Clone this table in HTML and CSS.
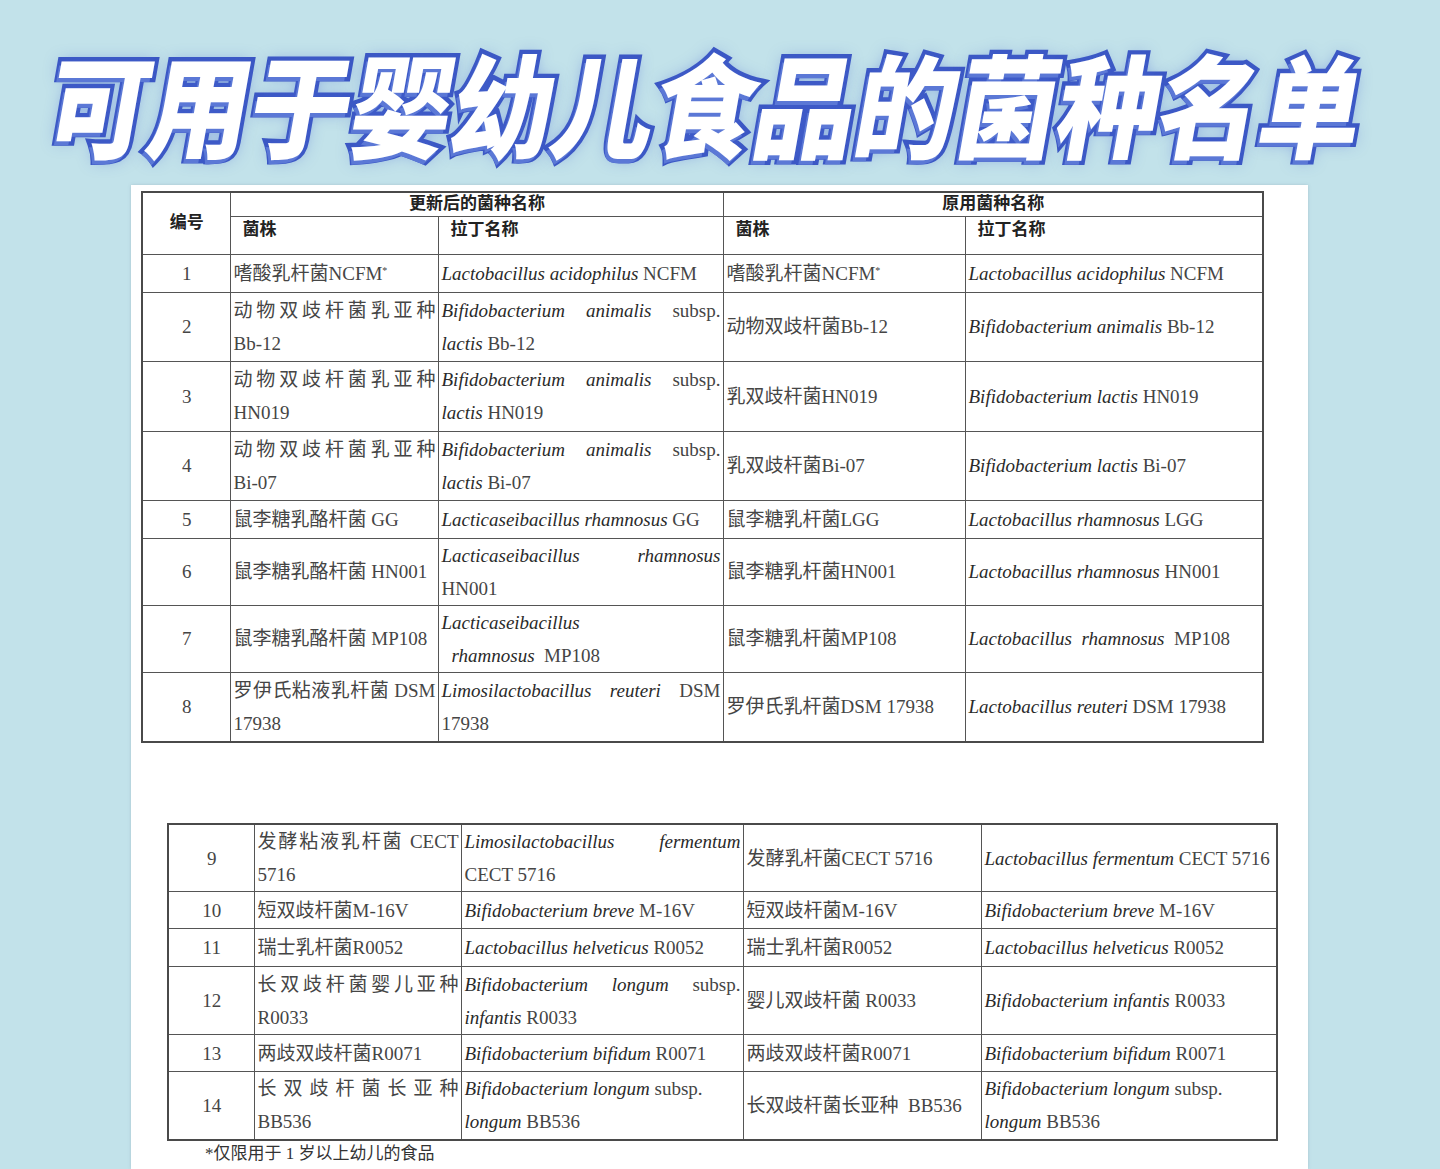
FILE: index.html
```html
<!DOCTYPE html>
<html lang="zh-CN">
<head>
<meta charset="utf-8">
<title>可用于婴幼儿食品的菌种名单</title>
<link rel="stylesheet" href="styles.css">
</head>
<body>
<header class="hero">
  <h1 class="title">可用于婴幼儿食品的菌种名单</h1>
</header>
<main class="paper">
  <table class="tbl tbl-a">
    <colgroup>
      <col class="a1"><col class="a2"><col class="a3"><col class="a4"><col class="a5">
    </colgroup>
    <tr class="h-top">
      <th rowspan="2" class="num head-num">编号</th>
      <th colspan="2" class="center">更新后的菌种名称</th>
      <th colspan="2" class="center">原用菌种名称</th>
    </tr>
    <tr class="h-sub">
      <th class="sub">菌株</th>
      <th class="sub">拉丁名称</th>
      <th class="sub">菌株</th>
      <th class="sub">拉丁名称</th>
    </tr>
    <tr class="r38">
      <td class="num">1</td>
      <td>嗜酸乳杆菌NCFM<sup>*</sup></td>
      <td><i>Lactobacillus acidophilus</i> NCFM</td>
      <td>嗜酸乳杆菌NCFM<sup>*</sup></td>
      <td><i>Lactobacillus acidophilus</i> NCFM</td>
    </tr>
    <tr class="r70">
      <td class="num">2</td>
      <td><span class="ln fill">动物双歧杆菌乳亚种</span><span class="ln">Bb-12</span></td>
      <td><span class="ln fill"><i>Bifidobacterium animalis</i> subsp.</span><span class="ln"><i>lactis</i> Bb-12</span></td>
      <td>动物双歧杆菌Bb-12</td>
      <td><i>Bifidobacterium animalis</i> Bb-12</td>
    </tr>
    <tr class="r71">
      <td class="num">3</td>
      <td><span class="ln fill">动物双歧杆菌乳亚种</span><span class="ln">HN019</span></td>
      <td><span class="ln fill"><i>Bifidobacterium animalis</i> subsp.</span><span class="ln"><i>lactis</i> HN019</span></td>
      <td>乳双歧杆菌HN019</td>
      <td><i>Bifidobacterium lactis</i> HN019</td>
    </tr>
    <tr class="r70">
      <td class="num">4</td>
      <td><span class="ln fill">动物双歧杆菌乳亚种</span><span class="ln">Bi-07</span></td>
      <td><span class="ln fill"><i>Bifidobacterium animalis</i> subsp.</span><span class="ln"><i>lactis</i> Bi-07</span></td>
      <td>乳双歧杆菌Bi-07</td>
      <td><i>Bifidobacterium lactis</i> Bi-07</td>
    </tr>
    <tr class="r38">
      <td class="num">5</td>
      <td>鼠李糖乳酪杆菌 GG</td>
      <td><i>Lacticaseibacillus rhamnosus</i> GG</td>
      <td>鼠李糖乳杆菌LGG</td>
      <td><i>Lactobacillus rhamnosus</i> LGG</td>
    </tr>
    <tr class="r66">
      <td class="num">6</td>
      <td>鼠李糖乳酪杆菌 HN001</td>
      <td><span class="ln fill"><i>Lacticaseibacillus rhamnosus</i></span><span class="ln">HN001</span></td>
      <td>鼠李糖乳杆菌HN001</td>
      <td><i>Lactobacillus rhamnosus</i> HN001</td>
    </tr>
    <tr class="r66">
      <td class="num">7</td>
      <td>鼠李糖乳酪杆菌 MP108</td>
      <td><span class="ln"><i>Lacticaseibacillus</i></span><span class="ln indent"><i>rhamnosus</i>&nbsp; MP108</span></td>
      <td>鼠李糖乳杆菌MP108</td>
      <td><i>Lactobacillus&nbsp; rhamnosus</i>&nbsp; MP108</td>
    </tr>
    <tr class="r71">
      <td class="num">8</td>
      <td><span class="ln fill">罗伊氏粘液乳杆菌 DSM</span><span class="ln">17938</span></td>
      <td><span class="ln fill"><i>Limosilactobacillus reuteri</i> DSM</span><span class="ln">17938</span></td>
      <td>罗伊氏乳杆菌DSM 17938</td>
      <td><i>Lactobacillus reuteri</i> DSM 17938</td>
    </tr>
  </table>

  <table class="tbl tbl-b">
    <colgroup>
      <col class="b1"><col class="b2"><col class="b3"><col class="b4"><col class="b5">
    </colgroup>
    <tr class="r66">
      <td class="num">9</td>
      <td><span class="ln fill">发酵粘液乳杆菌 CECT</span><span class="ln">5716</span></td>
      <td><span class="ln fill"><i>Limosilactobacillus fermentum</i></span><span class="ln">CECT 5716</span></td>
      <td>发酵乳杆菌CECT 5716</td>
      <td><i>Lactobacillus fermentum</i> CECT 5716</td>
    </tr>
    <tr class="r37">
      <td class="num">10</td>
      <td>短双歧杆菌M-16V</td>
      <td><i>Bifidobacterium breve</i> M-16V</td>
      <td>短双歧杆菌M-16V</td>
      <td><i>Bifidobacterium breve</i> M-16V</td>
    </tr>
    <tr class="r38">
      <td class="num">11</td>
      <td>瑞士乳杆菌R0052</td>
      <td><i>Lactobacillus helveticus</i> R0052</td>
      <td>瑞士乳杆菌R0052</td>
      <td><i>Lactobacillus helveticus</i> R0052</td>
    </tr>
    <tr class="r69">
      <td class="num">12</td>
      <td><span class="ln fill">长双歧杆菌婴儿亚种</span><span class="ln">R0033</span></td>
      <td><span class="ln fill"><i>Bifidobacterium longum</i> subsp.</span><span class="ln"><i>infantis</i> R0033</span></td>
      <td>婴儿双歧杆菌 R0033</td>
      <td><i>Bifidobacterium infantis</i> R0033</td>
    </tr>
    <tr class="r37">
      <td class="num">13</td>
      <td>两歧双歧杆菌R0071</td>
      <td><i>Bifidobacterium bifidum</i> R0071</td>
      <td>两歧双歧杆菌R0071</td>
      <td><i>Bifidobacterium bifidum</i> R0071</td>
    </tr>
    <tr class="r69">
      <td class="num">14</td>
      <td><span class="ln fill">长双歧杆菌长亚种</span><span class="ln">BB536</span></td>
      <td><span class="ln"><i>Bifidobacterium longum</i> subsp.</span><span class="ln"><i>longum</i> BB536</span></td>
      <td>长双歧杆菌长亚种&nbsp; BB536</td>
      <td><span class="ln"><i>Bifidobacterium longum</i> subsp.</span><span class="ln"><i>longum</i> BB536</span></td>
    </tr>
  </table>
  <p class="note">*仅限用于 1 岁以上幼儿的食品</p>
</main>
</body>
</html>
```

FILE: styles.css
```css
* { box-sizing: border-box; }

html, body {
  margin: 0;
  padding: 0;
}

body {
  width: 1440px;
  height: 1169px;
  overflow: hidden;
  background: #c2e2ea;
  font-family: "Liberation Serif", "Noto Sans CJK SC", serif;
  color: #333;
}

.hero {
  height: 185px;
  display: flex;
  align-items: center;
  justify-content: center;
  padding-top: 18px;
  padding-right: 28px;
}

.title {
  margin: 0;
  font-family: "Noto Sans CJK SC", sans-serif;
  font-weight: 900;
  font-size: 102px;
  line-height: 1;
  letter-spacing: -1px;
  color: #ffffff;
  -webkit-text-stroke: 8px #3b57c4;
  paint-order: stroke fill;
  transform: skewX(-10deg) scaleY(1.1);
  text-shadow: -2px 3px 0 #5b78d6, 0 0 14px rgba(70, 100, 210, 0.5);
  white-space: nowrap;
}

.paper {
  margin-left: 131px;
  width: 1177px;
  height: 984px;
  background: #ffffff;
  padding: 6px 0 0 10px;
  box-shadow: 0 0 3px rgba(120, 150, 160, 0.35);
}

.tbl {
  border-collapse: collapse;
  table-layout: fixed;
  border: 2px solid #4a4a4a;
  font-size: 19px;
  line-height: 33px;
}

.tbl th,
.tbl td {
  border: 1px solid #555;
  padding: 0 2px 0 3px;
  vertical-align: middle;
  text-align: left;
  font-weight: 400;
  overflow: hidden;
  white-space: nowrap;
}

.tbl-a { width: 1121px; }
.tbl-b { width: 1109px; margin-top: 80px; margin-left: 26px; }

.a1 { width: 88px; }
.a2 { width: 208px; }
.a3 { width: 285px; }
.a4 { width: 242px; }
.a5 { width: 298px; }

.b1 { width: 86px; }
.b2 { width: 207px; }
.b3 { width: 282px; }
.b4 { width: 238px; }
.b5 { width: 296px; }

.tbl th {
  font-weight: 700;
  font-size: 17px;
  color: #222;
}

.h-top { height: 24px; }
.h-top th { line-height: 22px; }
.h-top th.center { text-align: center; }
.h-sub { height: 38px; }
.h-sub th.sub {
  vertical-align: top;
  padding-left: 12px;
  line-height: 26px;
}
.head-num { text-align: center !important; }

.num {
  text-align: center !important;
  color: #222;
}

.r37 { height: 37px; }
.r38 { height: 38px; }
.r66 { height: 66px; }
.r69 { height: 69px; }
.r70 { height: 69px; }
.r71 { height: 70px; }
.tbl-b .r66 { height: 65px; }
.tbl-b .r69 { height: 68px; }

.tbl td { color: #454545; }
.tbl td i { color: #2a2a2a; }

.ln { display: block; }

.fill {
  text-align: justify;
  text-align-last: justify;
  text-justify: inter-character;
  white-space: normal;
}

.indent { padding-left: 10px; }

sup {
  font-size: 10px;
  line-height: 0;
  vertical-align: 6px;
}

.note {
  margin: 2px 0 0 64px;
  font-size: 17px;
  line-height: 22px;
  color: #333;
}
```
